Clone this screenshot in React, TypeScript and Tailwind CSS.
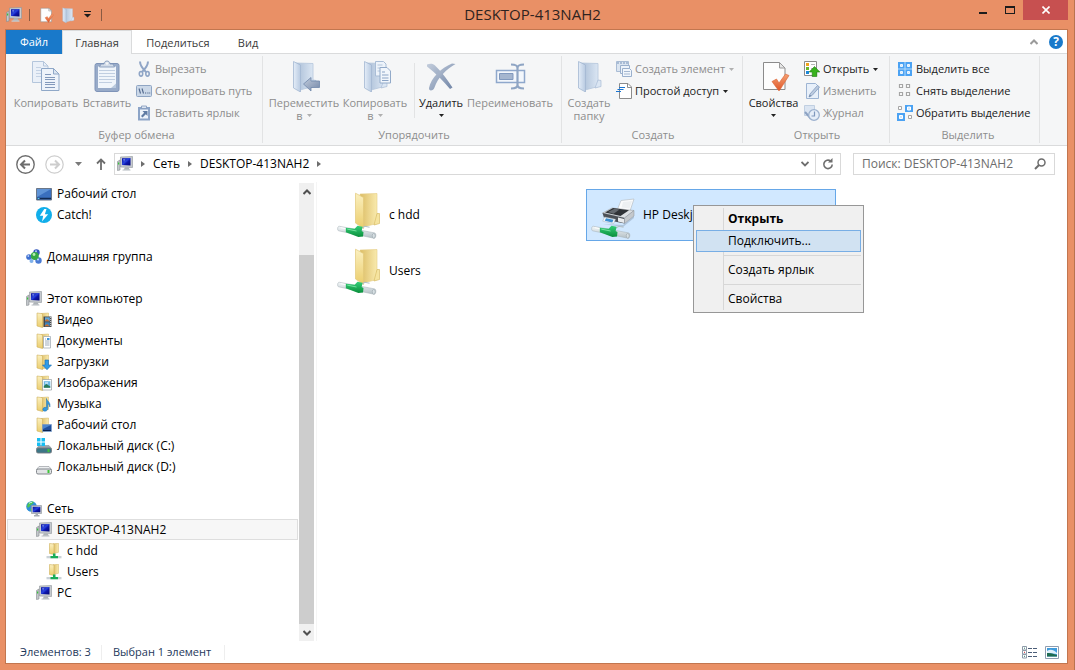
import type { ReactNode } from "react";

type IconProps = { className?: string };

const Gradients = () => (
  <svg className="absolute h-0 w-0" aria-hidden="true">
    <defs>
      <linearGradient id="paleFront" x1="0" x2="1">
        <stop offset="0" stopColor="#e4edf8" />
        <stop offset="1" stopColor="#b8cae1" />
      </linearGradient>
      <linearGradient id="paleBack" x1="0" x2="1">
        <stop offset="0" stopColor="#a9bdd6" />
        <stop offset="1" stopColor="#dbe6f3" />
      </linearGradient>
      <linearGradient id="goldFront" x1="0" x2="0" y1="0" y2="1">
        <stop offset="0" stopColor="#fbf0c0" />
        <stop offset="1" stopColor="#ebcd6c" />
      </linearGradient>
      <linearGradient id="goldBack" x1="0" x2="1">
        <stop offset="0" stopColor="#dcbd65" />
        <stop offset="1" stopColor="#f9eaae" />
      </linearGradient>
      <linearGradient id="screen" x1="0" x2="1" y1="0" y2="1">
        <stop offset="0" stopColor="#0a0f9c" />
        <stop offset="0.45" stopColor="#2742dc" />
        <stop offset="0.6" stopColor="#0d16ae" />
        <stop offset="1" stopColor="#060870" />
      </linearGradient>
      <linearGradient id="steel" x1="0" x2="1" y1="0" y2="1">
        <stop offset="0" stopColor="#c3cddc" />
        <stop offset="1" stopColor="#7387a8" />
      </linearGradient>
      <linearGradient id="orange" x1="0" x2="0" y1="0" y2="1">
        <stop offset="0" stopColor="#f4a173" />
        <stop offset="1" stopColor="#e0582a" />
      </linearGradient>
      <linearGradient id="cable" x1="0" x2="0" y1="0" y2="1">
        <stop offset="0" stopColor="#35cf78" />
        <stop offset="1" stopColor="#0b8f3c" />
      </linearGradient>
      <linearGradient id="pipe" x1="0" x2="0" y1="0" y2="1">
        <stop offset="0" stopColor="#f4f8f9" />
        <stop offset="1" stopColor="#b3bfc5" />
      </linearGradient>
    </defs>
  </svg>
);

const PcIcon = ({ className = "h-4 w-4" }: IconProps) => (
  <svg className={className} viewBox="0 0 16 16">
    <path d="M0.500 5.500L3 4v10L0.500 14.500z" fill="#c3c7cb" stroke="#85898d" strokeWidth="0.6" />
    <path d="M1 6.500h1.200v2H1z" fill="#36c43a" />
    <path d="M3.500 1L15.500 0.500v11L3.500 11z" fill="#c6cacf" stroke="#8d9399" strokeWidth="0.6" />
    <path d="M5 2.300L13.500 2v7.500L5 9z" fill="url(#screen)" />
    <path d="M6 3l2.500-0.200L7 6z" fill="#8195f0" opacity="0.700" />
    <path d="M8 11.300h3.500L13 14H6.500z" fill="#aeb3b8" />
    <path d="M5.500 13.500h8v1.200h-8z" fill="#c9cdd1" />
  </svg>
);

const SmallFolder = ({ className = "h-4 w-4", children }: IconProps & { children?: ReactNode }) => (
  <svg className={className} viewBox="0 0 16 16">
    <path d="M5 1.500L12.500 1v12.500L6 15z" fill="url(#goldBack)" stroke="#d2b463" strokeWidth="0.5" />
    <path d="M1 1l5.500 0.700v13.800L1 14z" fill="url(#goldFront)" stroke="#cfb05a" strokeWidth="0.6" />
    {children}
  </svg>
);

const VideoIcon = () => (
  <SmallFolder>
    <path d="M7.500 4.500h8v10.500h-8z" fill="#45484c" />
    <path d="M9 5.300h4.800v4H9z" fill="#63a6d6" />
    <path d="M9 10.300h4.800v4H9z" fill="#3f86bd" />
    <path d="M9 8.500l2-1.500 2.800 2.300H9zM9 13.500l2-1.500 2.800 2.300H9z" fill="#c66f35" />
    <path d="M14.700 5v10" stroke="#fff" strokeWidth="0.8" strokeDasharray="1 1" />
  </SmallFolder>
);

const DocsIcon = () => (
  <SmallFolder>
    <path d="M7.500 3.500h7v11.500h-7z" fill="#fff" stroke="#9aa4ad" strokeWidth="0.7" />
    <path d="M9 6h1M9 8h4.500M9 10h4.500M9 12h4.500" stroke="#8697a8" strokeWidth="0.8" />
    <path d="M11 5h2.500v2H11z" fill="#3b94da" />
  </SmallFolder>
);

const DownloadsIcon = () => (
  <SmallFolder>
    <path d="M9 6h3.500v5h3L11 15.700 6.500 11H9z" fill="#2f9be8" stroke="#176cb0" strokeWidth="0.6" />
  </SmallFolder>
);

const PicturesIcon = () => (
  <SmallFolder>
    <path d="M6.500 4.500h9v10.500h-9z" fill="#fff" stroke="#959da4" strokeWidth="0.7" />
    <path d="M7.800 6.200h6.500v6.500H7.800z" fill="#6cb8e6" />
    <path d="M7.800 11l2.500-2 4 2.500v1.200H7.800z" fill="#2b7b58" />
    <path d="M9 7.500h3v1H9z" fill="#fff" />
  </SmallFolder>
);

const MusicIcon = () => (
  <SmallFolder>
    <path d="M10.500 2.500c0.500 3 4.500 3.500 3.300 8.500-0.300-2-1-3-2-3.500v4.800c0 3.500-5 3.700-5 1.200 0-1.700 2-2.600 3.700-2z" fill="#3499de" stroke="#1a6cad" strokeWidth="0.5" />
  </SmallFolder>
);

const DesktopFolderIcon = () => (
  <SmallFolder>
    <path d="M6.500 7.500h9v7h-9z" fill="#1f4f9e" stroke="#7ea0cc" strokeWidth="0.7" />
    <path d="M7 8l8 0-8 4z" fill="#4b86d0" />
    <path d="M7 13.500h8" stroke="#0c2350" />
  </SmallFolder>
);

const DesktopIcon = () => (
  <svg className="h-4 w-4" viewBox="0 0 16 16">
    <path d="M0.500 2.500h15v11.500h-15z" fill="#3a6fbe" stroke="#6b7788" />
    <path d="M1 3h14L1 11z" fill="#5f93d6" />
    <path d="M1 12.500h14" stroke="#122a52" strokeWidth="1.500" />
    <path d="M1.500 12.500h2" stroke="#58c7f0" />
  </svg>
);

const CatchIcon = () => (
  <svg className="h-4 w-4" viewBox="0 0 16 16">
    <circle cx="8" cy="8" r="8" fill="#11aeea" />
    <path d="M8.300 2L3.800 8.800h3.400L6 14.500 12.200 7.200H8.900L10.500 2z" fill="#fff" />
  </svg>
);

const HomegroupIcon = () => (
  <svg className="h-4 w-4" viewBox="0 0 16 16">
    <circle cx="3" cy="8" r="2.800" fill="#3d6fd0" />
    <circle cx="10.500" cy="3.500" r="3.200" fill="#3558bd" />
    <circle cx="12.500" cy="11.500" r="3.200" fill="#4a7bd4" />
    <circle cx="8.800" cy="7" r="4" fill="#35a845" />
    <circle cx="5.500" cy="12" r="2" fill="#7fb0ea" />
    <circle cx="8" cy="5.500" r="1.400" fill="#b9efb4" />
    <circle cx="10" cy="2.200" r="1" fill="#b8cdf8" />
    <circle cx="2.300" cy="7" r="0.900" fill="#b8cdf8" />
    <circle cx="12" cy="10.500" r="1" fill="#c9dcfa" />
  </svg>
);

const DriveIcon = ({ system = false }: { system?: boolean }) => (
  <svg className="h-4 w-4" viewBox="0 0 16 16">
    <path d="M3 7.500h10l2.500 3H0.500z" fill={system ? "#9aa6ae" : "#eceef0"} stroke="#8b9095" strokeWidth="0.6" />
    {system && <path d="M1 0h3.500v3.500H1zM5.500 0H9v3.500H5.500zM1 4.500h3.500V8H1zM5.500 4.500H9V8H5.500z" fill="#16bdf2" />}
    <rect x="0.500" y="10" width="15" height="5" rx="1.500" fill={system ? "#3d7686" : "#e2e4e6"} stroke="#777c81" strokeWidth="0.9" />
    <path d="M11.500 11h2v3h-2z" fill="#3fc43a" />
  </svg>
);

const NetworkIcon = () => (
  <svg className="h-4 w-4" viewBox="0 0 16 16">
    <circle cx="5.500" cy="5.500" r="5.300" fill="#2f8fd8" />
    <path d="M2 2.500C4 0 7 0.200 8 1c-1 1-1 2-2.500 2.500S4 6 2.500 6.500 0.500 5 2 2.500zM4 8l3-1 1 2-2.500 1.800z" fill="#4cc456" />
    <path d="M3 2.500c1-1 2-1.200 3-1" stroke="#d4f4ff" fill="none" />
    <path d="M5.500 4.500h10v8h-10z" fill="#c3c8ce" stroke="#8a9097" strokeWidth="0.6" />
    <path d="M6.700 5.800h7.600v5.400H6.700z" fill="url(#screen)" />
    <path d="M9.500 12.500h2.500v1.500h1.500v1.500H8v-1.500h1.500z" fill="#a7adb3" />
  </svg>
);

const ShareIcon = () => (
  <svg className="h-4 w-4" viewBox="0 0 16 16">
    <path d="M7 0.800l5.500-0.500v9L8 10.500z" fill="url(#goldBack)" stroke="#d2b463" strokeWidth="0.5" />
    <path d="M3.500 0.500L8 1v10.500l-4.500-1z" fill="url(#goldFront)" stroke="#cfb05a" strokeWidth="0.6" />
    <path d="M0.500 13h15v2.300h-15z" fill="#cbd3d8" />
    <path d="M7 10.500h2.500V13h2.500v2.300H4.500V13H7z" fill="#18ad59" />
  </svg>
);

const NetworkCable = () => (
  <g transform="translate(0 2) scale(0.93 0.95)">
    <path d="M23 39l7-4 5 1" fill="none" stroke="#b5c0c4" strokeWidth="1.200" />
    <path d="M2.500 35l38 7c2 0.500 1.500 6-0.800 5.600L1.700 39.800C0 39.300 0.500 34.500 2.500 35z" fill="url(#pipe)" stroke="#aab4b9" strokeWidth="0.6" />
    <path d="M4 36.500l8 1.600" stroke="#fff" />
    <ellipse cx="39.500" cy="45" rx="1.600" ry="2.500" fill="#d7e0e4" stroke="#97a3a9" strokeWidth="0.600" />
    <path d="M9.500 36.500l9.500 1.200 3-3.200 5.500 1-1 4.500 2 1-0.500 4.700-5 0.500L9.500 41.300z" fill="url(#cable)" />
    <path d="M11 38l10 2" stroke="#8eeeb2" strokeWidth="0.800" />
  </g>
);

const FolderShareLarge = () => (
  <svg className="h-12 w-12" viewBox="0 0 48 48">
    <path d="M23 3l17-0.500v30L26 36z" fill="url(#goldBack)" stroke="#e4cd85" strokeWidth="0.6" />
    <path d="M40 22.500h2.500V32.500L37 34z" fill="#f6e49f" stroke="#d9bd68" strokeWidth="0.7" />
    <path d="M18.500 2.200L26.500 6.500v31L18.500 32z" fill="url(#goldFront)" stroke="#e2c87a" strokeWidth="0.7" />
    <NetworkCable />
  </svg>
);

const PrinterLarge = () => (
  <svg className="h-12 w-12" viewBox="0 0 48 48">
    <path d="M12 33l20 1 11-9v2L32 36z" fill="#8fa6bd" opacity="0.500" />
    <path d="M30 9.500l13-1.500-4.500 13.500-12.500-2z" fill="#fafbfc" stroke="#b8bec4" strokeWidth="0.7" />
    <path d="M32 11l9-1-2.500 7.500-8-1z" fill="#edf0f2" />
    <path d="M11.500 22l9.500-5 22 2.500-9.500 7.500z" fill="#dcdfe2" stroke="#9aa0a5" strokeWidth="0.6" />
    <path d="M14 21.500l8-4.500 16 2.200-8.500 5.800z" fill="#303337" />
    <path d="M17 21l6.500-3.200 5 0.800-6 4.200z" fill="#63686e" />
    <path d="M11.500 22l22 5v5.500L13.500 28.500z" fill="#4c5056" />
    <path d="M33.500 27l9.500-7.500v5.500l-9.500 7.500z" fill="#c4c8cc" stroke="#8c9196" strokeWidth="0.5" />
    <path d="M27 26.500l6 1.400v4L27 30.600z" fill="#e9ebed" />
    <path d="M13.500 26l11 2.300-1.800 4.200-11-2.300z" fill="#f5f8fa" stroke="#9fb0be" strokeWidth="0.500" />
    <path d="M15 27.200l7.500 1.600-1.200 2.700-7.500-1.700z" fill="#3b8fd2" />
    <NetworkCable />
  </svg>
);

const CopyIcon = () => (
  <svg className="h-8 w-8" viewBox="0 0 32 32">
    <path d="M2.500 1.500h11l4.500 4.500v16.500h-15.500z" fill="#eaf0f8" stroke="#b4c6dc" />
    <path d="M13.500 1.500v4.500h4.500" fill="none" stroke="#b4c6dc" />
    <path d="M6 7.500h5M6 10.500h5M6 13.500h5M6 16.500h5" stroke="#c4d2e4" />
    <path d="M11.500 8.500h12l5.500 5.500v16.500H11.500z" fill="#edf3fa" stroke="#8fa8c8" />
    <path d="M23.500 8.500v5.500H29z" fill="#dbe6f2" stroke="#8fa8c8" />
    <path d="M15 14.500h6M15 17.500h10M15 19.500h10M15 22.500h10M15 24.500h10M15 27.500h10" stroke="#8299bb" />
  </svg>
);

const PasteIcon = () => (
  <svg className="h-8 w-8" viewBox="0 0 32 32">
    <rect x="4" y="3.500" width="24" height="28" rx="2" fill="#98abc9" stroke="#7f94b8" />
    <path d="M7 6.500h18v21.500H7z" fill="#f0f5fb" />
    <path d="M8 10.500h16M8 13.500h16M8 16.500h16M8 19.500h16M8 22.500h13" stroke="#c0cee1" />
    <path d="M20 28l5-4.500V28z" fill="#b9c9de" />
    <path d="M10 4h3c0-4 6-4 6 0h3l1.500 3h-15z" fill="#d3dce9" stroke="#7c93b5" strokeWidth="0.800" />
    <circle cx="16" cy="3.500" r="1.200" fill="#f5f6f7" />
  </svg>
);

const CutIcon = () => (
  <svg className="h-4 w-4" viewBox="0 0 16 16" fill="none">
    <path d="M4 0.500C4 4 7 8 10 11M12 0.500C12 4 9 8 6 11" stroke="#8fa5c6" strokeWidth="2" />
    <ellipse cx="5" cy="12.800" rx="1.700" ry="2.300" stroke="#8fa5c6" strokeWidth="1.600" />
    <ellipse cx="11.500" cy="12.800" rx="1.700" ry="2.300" stroke="#8fa5c6" strokeWidth="1.600" />
  </svg>
);

const CopyPathIcon = () => (
  <svg className="h-4 w-4" viewBox="0 0 16 16">
    <rect x="0.500" y="2.500" width="15" height="11" rx="1" fill="#cbd8e8" stroke="#8fa5c3" />
    <path d="M3 5.500l1.500 5M6 5.500l1.500 5" stroke="#4f678c" strokeWidth="1.100" />
    <path d="M9 10h1.200M11.300 10h1.200M13.200 10h1" stroke="#4f678c" strokeWidth="1.200" />
  </svg>
);

const PasteLinkIcon = () => (
  <svg className="h-4 w-4" viewBox="0 0 16 16">
    <path d="M2 2h12v13.500H2z" fill="#8ca4c7" />
    <path d="M4 4.500h8v9H4z" fill="#edf3fa" />
    <path d="M5.500 1h5v2.500h-5z" fill="#dbe4f0" stroke="#8298ba" strokeWidth="0.800" />
    <path d="M6.500 6h5v5L9.800 9.300 6.500 12.500 5 11l3.200-3.300z" fill="#5f7ba3" />
  </svg>
);

const PaleFolder = ({ className = "h-8 w-8", children }: IconProps & { children?: ReactNode }) => (
  <svg className={className} viewBox="0 0 32 32">
    <path d="M8 3l17 0.500v23L12 30z" fill="url(#paleBack)" stroke="#b5c7dc" strokeWidth="0.8" />
    <path d="M25 20l3 0.500v6L22 28z" fill="#dbe6f3" stroke="#a9bcd5" strokeWidth="0.700" />
    <path d="M5.500 1.500l7 3.500v27l-7-4z" fill="url(#paleFront)" stroke="#a3b8d2" strokeWidth="0.800" />
    {children}
  </svg>
);

const MoveToIcon = () => (
  <PaleFolder>
    <path d="M15.500 24l7.500-6.500v3.500h8.500v6.500H23V31z" fill="url(#steel)" stroke="#7088ab" strokeWidth="0.800" />
  </PaleFolder>
);

const CopyToIcon = () => (
  <PaleFolder>
    <path d="M16.500 1.500h8l2.500 2.500v12H16.500z" fill="#edf3fa" stroke="#a9bdd6" />
    <path d="M18.500 5h5M18.500 8h5M18.500 11h3" stroke="#b4c6dc" />
    <path d="M21 7.500h7l3.500 3.500v12H21z" fill="#f1f6fc" stroke="#92aac9" />
    <path d="M23 12h3M23 15h6.500M23 18h6.500M23 20.500h6.500" stroke="#8ba4c6" />
  </PaleFolder>
);

const DeleteIcon = () => (
  <svg className="h-8 w-8" viewBox="0 0 32 32">
    <path d="M2 4.500C5 3.500 8 3.500 10 5.500 16 11 21 18 27.500 27.500L25 29C18 21 11 13 2 6.500z" fill="url(#steel)" />
    <path d="M30.500 4C22 9 13 17 9.500 27.500 8.500 31 3.500 31.500 4 28 6 18 16 8 27 3.500z" fill="url(#steel)" />
  </svg>
);

const RenameIcon = () => (
  <svg className="h-8 w-8" viewBox="0 0 32 32">
    <path d="M2.500 10.500h28v12h-28z" fill="#f3f7fc" stroke="#8fa8cc" strokeWidth="1.500" />
    <path d="M5.500 13.500H19v6H5.500z" fill="#a5b6cf" stroke="#8199be" />
    <path d="M17 4.500c4 0 6.500 1 6.500 3.500 0-2.500 2.500-3.500 6.500-3.500M17 28.500c4 0 6.500-1 6.500-3.500 0 2.500 2.500 3.500 6.500 3.500M23.500 7v19" fill="none" stroke="#8fa5c4" strokeWidth="2.200" />
  </svg>
);

const PropertiesIcon = ({ className = "h-8 w-8" }: IconProps) => (
  <svg className={className} viewBox="0 0 32 32">
    <path d="M5.500 2.500h16l5.500 5.500v21.500H5.500z" fill="#fdfdfd" stroke="#8b8b8b" />
    <path d="M21.500 2.500V8H27z" fill="#e7e7e7" stroke="#9a9a9a" />
    <path d="M14 21.500l4.500-2.500 2.500 4L27.500 14l3.500 1.500-9.500 15h-1z" fill="url(#orange)" stroke="#d96233" strokeWidth="0.600" />
  </svg>
);

const NewItemIcon = () => (
  <svg className="h-4 w-4" viewBox="0 0 16 16">
    <path d="M0.500 0.500h12v10h-12z" fill="#dbe5f1" stroke="#a9bcd5" />
    <path d="M1 2h11" stroke="#a9bcd5" strokeWidth="2" strokeDasharray="2 1" />
    <path d="M4.500 4.500h9v8h-9z" fill="#edf3fa" stroke="#9ab0cd" />
    <path d="M6.500 7.500h7l2 2v6h-9z" fill="#f1f6fc" stroke="#9ab0cd" />
    <path d="M8 10.500h6M8 13h6" stroke="#a5b8d1" />
  </svg>
);

const EasyAccessIcon = () => (
  <svg className="h-4 w-4" viewBox="0 0 16 16">
    <path d="M3.500 0.500h8.500l3.500 3.500v11.500h-12z" fill="#fff" stroke="#8c8c8c" />
    <path d="M11.500 0.500v4h4" fill="none" stroke="#8c8c8c" />
    <path d="M3 4.500h6M1.500 6.500h6M0 8.500h5" stroke="#1974d2" strokeWidth="1.200" />
  </svg>
);

const OpenIcon = () => (
  <svg className="h-4 w-4" viewBox="0 0 16 16">
    <path d="M0.500 0.500h12v14h-12z" fill="#fff" stroke="#8b8b8b" />
    <path d="M2 2h3v3H2z" fill="#f0a41c" />
    <path d="M2 6h3v3H2z" fill="#6cb82c" />
    <path d="M2 10h3v3H2z" fill="#1b86d8" />
    <path d="M7 3.500h4M7 7.500h3" stroke="#b8b8b8" />
    <path d="M10.500 5.500l5.300 5.500h-3v4.500h-4.600V11h-3z" fill="#38b21d" stroke="#1f7e12" strokeWidth="0.600" />
  </svg>
);

const EditIcon = () => (
  <svg className="h-4 w-4" viewBox="0 0 16 16">
    <path d="M2.500 0.500h9l3 3v12h-12z" fill="#e8f0fa" stroke="#9db4d3" />
    <path d="M15.500 4L8 12.500l-3 1.500 1-3L13.500 2.500z" fill="#bccbe0" stroke="#8ba1c2" strokeWidth="0.900" />
    <path d="M5 14l1-2 1 0.800z" fill="#5c7496" />
  </svg>
);

const HistoryIcon = () => (
  <svg className="h-4 w-4" viewBox="0 0 16 16">
    <path d="M0.500 0.500h10v10h-10z" fill="#dbe5f2" stroke="#c0cfe1" />
    <path d="M1 7l4 4.500V9.500" stroke="#8ba1c2" strokeWidth="2" fill="none" />
    <circle cx="10" cy="10" r="5.300" fill="#e6eef8" stroke="#9cb1ce" strokeWidth="1.300" />
    <path d="M10.500 6.500v4.500H7.500" fill="none" stroke="#7f98bd" strokeWidth="1.200" />
  </svg>
);

const SelectAllIcon = () => (
  <svg className="h-4 w-4" viewBox="0 0 16 16">
    <path d="M1 1h14v14H1z" fill="#4ba2f3" />
    <path d="M3.500 3.500h2v2h-2zM10.500 3.500h2v2h-2zM3.500 10.500h2v2h-2zM10.500 10.500h2v2h-2z" fill="#cfe7fd" stroke="#f0f8ff" />
    <path d="M8 1v14M1 8h14" stroke="#b3dafb" />
  </svg>
);

const SelectNoneIcon = () => (
  <svg className="h-4 w-4" viewBox="0 0 16 16">
    <path d="M2.500 1.500h3v3h-3zM9.500 1.500h3v3h-3zM2.500 9.500h3v3h-3zM9.500 9.500h3v3h-3z" fill="#fff" stroke="#a5a5a5" strokeWidth="1.200" />
  </svg>
);

const InvertIcon = () => (
  <svg className="h-4 w-4" viewBox="0 0 16 16">
    <path d="M8 0h8v7H8zM0 8h8v8H0z" fill="#4ba2f3" />
    <path d="M10.500 2h3v3h-3zM2.500 10.500h3v3h-3z" fill="#cfe7fd" stroke="#fff" />
    <path d="M1.500 1.500h3v3h-3zM11.500 10.500h3v3h-3z" fill="#fff" stroke="#a5a5a5" />
  </svg>
);

const Caret = ({ className = "text-[#222222]" }: IconProps) => (
  <svg className={`inline-block h-[3px] w-[5px] ${className}`} viewBox="0 0 5 3">
    <path d="M0 0h5L2.500 3z" fill="currentColor" />
  </svg>
);

const Chevron = () => (
  <svg className="h-[6px] w-1" viewBox="0 0 4 6">
    <path d="M0 0l4 3-4 3z" fill="#6d6d6d" />
  </svg>
);

type BigButtonProps = {
  icon: ReactNode;
  label: string;
  second?: string;
  caret?: boolean;
  disabled?: boolean;
  className: string;
};

const BigButton = ({ icon, label, second, caret, disabled, className }: BigButtonProps) => (
  <button
    type="button"
    disabled={disabled}
    className={`mt-1 flex shrink-0 flex-col items-center self-start whitespace-nowrap leading-[13px] text-[#222222] disabled:text-[#8d8d8d] ${className}`}
  >
    {icon}
    <span className="mt-1">{label}</span>
    <span className="flex h-[13px] items-center gap-1">
      {second}
      {caret && <Caret className={disabled ? "text-[#b0b0b0]" : "text-[#222222]"} />}
    </span>
  </button>
);

type SmallButtonProps = { icon: ReactNode; label: string; caret?: boolean; disabled?: boolean };

const SmallButton = ({ icon, label, caret, disabled }: SmallButtonProps) => (
  <button
    type="button"
    disabled={disabled}
    className="flex h-[22px] items-center gap-[3px] whitespace-nowrap text-[#222222] disabled:text-[#8d8d8d]"
  >
    {icon}
    <span>{label}</span>
    {caret && <Caret className={disabled ? "ml-px text-[#b0b0b0]" : "ml-px text-[#222222]"} />}
  </button>
);

const Group = ({ title, className, children }: { title: string; className: string; children: ReactNode }) => (
  <section className={`my-[2px] flex shrink-0 flex-col border-r border-[#e2e3e4] ${className}`}>
    <div className="flex h-[73px]">{children}</div>
    <h2 className="text-center leading-4 text-[#8d8d8d]">{title}</h2>
  </section>
);

const ButtonList = ({ className = "", children }: { className?: string; children: ReactNode }) => (
  <div className={`mt-[2px] flex flex-col ${className}`}>{children}</div>
);

const Ribbon = () => (
  <div className="flex h-[92px] border-b border-[#dadbdc] bg-[#f5f6f7] text-[11px]">
    <Group title="Буфер обмена" className="w-[257px] pl-[5px]">
      <BigButton icon={<CopyIcon />} label="Копировать" disabled className="w-[70px]" />
      <BigButton icon={<PasteIcon />} label="Вставить" disabled className="w-[52px]" />
      <ButtonList className="ml-[3px]">
        <SmallButton icon={<CutIcon />} label="Вырезать" disabled />
        <SmallButton icon={<CopyPathIcon />} label="Скопировать путь" disabled />
        <SmallButton icon={<PasteLinkIcon />} label="Вставить ярлык" disabled />
      </ButtonList>
    </Group>
    <Group title="Упорядочить" className="w-[299px] pl-1">
      <BigButton icon={<MoveToIcon />} label="Переместить" second="в" caret disabled className="w-[74px]" />
      <BigButton icon={<CopyToIcon />} label="Копировать" second="в" caret disabled className="w-[68px]" />
      <div className="mt-[7px] ml-[5px] h-[55px] w-px bg-[#e2e3e4]" />
      <BigButton icon={<DeleteIcon />} label="Удалить" caret className="w-[52px]" />
      <BigButton icon={<RenameIcon />} label="Переименовать" disabled className="w-[86px]" />
    </Group>
    <Group title="Создать" className="w-[181px] pl-[2px]">
      <BigButton icon={<PaleFolder />} label="Создать" second="папку" disabled className="w-[50px]" />
      <ButtonList className="ml-[2px]">
        <SmallButton icon={<NewItemIcon />} label="Создать элемент" caret disabled />
        <SmallButton icon={<EasyAccessIcon />} label="Простой доступ" caret />
      </ButtonList>
    </Group>
    <Group title="Открыть" className="w-[147px] pl-[2px]">
      <BigButton icon={<PropertiesIcon />} label="Свойства" caret className="w-[57px]" />
      <ButtonList className="ml-[2px]">
        <SmallButton icon={<OpenIcon />} label="Открыть" caret />
        <SmallButton icon={<EditIcon />} label="Изменить" disabled />
        <SmallButton icon={<HistoryIcon />} label="Журнал" disabled />
      </ButtonList>
    </Group>
    <Group title="Выделить" className="w-[150px] pl-[7px]">
      <ButtonList>
        <SmallButton icon={<SelectAllIcon />} label="Выделить все" />
        <SmallButton icon={<SelectNoneIcon />} label="Снять выделение" />
        <SmallButton icon={<InvertIcon />} label="Обратить выделение" />
      </ButtonList>
    </Group>
  </div>
);

const TitleBar = () => (
  <header className="relative flex h-[29px] items-center">
    <div className="flex items-center pl-px">
      <PcIcon />
      <span className="ml-[7px] h-3 w-px bg-[#8a5a42]" />
      <button type="button" aria-label="Свойства" className="ml-2">
        <PropertiesIcon className="h-4 w-4" />
      </button>
      <button type="button" aria-label="Новая папка" className="ml-[6px]">
        <PaleFolder className="h-4 w-4" />
      </button>
      <button type="button" aria-label="Настройка панели быстрого доступа" className="ml-2">
        <svg className="h-[7px] w-[7px]" viewBox="0 0 7 7">
          <path d="M0 0h7v1H0zM0 3h7L3.500 6.500z" fill="#1c1c1c" />
        </svg>
      </button>
      <span className="ml-[10px] h-3 w-px bg-[#8a5a42]" />
    </div>
    <h1 className="absolute inset-x-0 top-1 pr-2 text-center text-[15px] leading-5 text-[#2e2320]">
      DESKTOP-413NAH2
    </h1>
    <div className="relative ml-auto flex h-5 self-start">
      <button type="button" aria-label="Свернуть" className="flex w-[27px] items-center justify-center">
        <svg className="h-[10px] w-[10px]" viewBox="0 0 10 10">
          <path d="M1 7h8v2H1z" fill="#1c1c1c" />
        </svg>
      </button>
      <button type="button" aria-label="Развернуть" className="flex w-[27px] items-center justify-center">
        <svg className="h-[10px] w-[10px]" viewBox="0 0 10 10">
          <path d="M0 1h10v8H0zM1 3v5h8V3z" fill="#1c1c1c" fillRule="evenodd" />
        </svg>
      </button>
      <button type="button" aria-label="Закрыть" className="flex w-[45px] items-center justify-center bg-[#c75050]">
        <svg className="h-2 w-2" viewBox="0 0 8 8">
          <path d="M0.500 0.500l7 7M7.500 0.500l-7 7" stroke="#fff" strokeWidth="1.600" />
        </svg>
      </button>
    </div>
  </header>
);

const TabBar = () => (
  <div className="flex h-6 items-stretch border-b border-[#dadbdc] bg-white text-[11px] text-[#3b3b3b]">
    <button type="button" className="mb-[-1px] w-14 bg-[#1979ca] text-white">
      Файл
    </button>
    <button type="button" className="mb-[-1px] w-[70px] border-x border-t border-[#dadbdc] bg-[#f5f6f7] pt-[2px]">
      Главная
    </button>
    <button type="button" className="w-[92px] pt-[3px]">
      Поделиться
    </button>
    <button type="button" className="w-12 pt-[3px]">
      Вид
    </button>
    <div className="ml-auto flex items-center gap-[11px] pr-1">
      <button type="button" aria-label="Свернуть ленту">
        <svg className="h-[6px] w-2" viewBox="0 0 8 6">
          <path d="M0.500 5L4 1.500 7.500 5" fill="none" stroke="#9a9a9a" strokeWidth="2" />
        </svg>
      </button>
      <button
        type="button"
        aria-label="Справка"
        className="flex h-[14px] w-[14px] items-center justify-center rounded-full bg-[#1979ca] text-xs leading-3 font-bold text-white"
      >
        ?
      </button>
    </div>
  </div>
);

const AddressRow = () => (
  <div className="flex h-9 items-center pr-3 pl-[10px]">
    <button type="button" aria-label="Назад">
      <svg className="h-[19px] w-[19px]" viewBox="0 0 19 19" fill="none" stroke="#6d6d6d">
        <circle cx="9.500" cy="9.500" r="8.700" strokeWidth="1.400" />
        <path d="M14 9.500H5.500M9 5.500l-4 4 4 4" strokeWidth="2" />
      </svg>
    </button>
    <button type="button" aria-label="Вперед" className="ml-[10px]">
      <svg className="h-[19px] w-[19px]" viewBox="0 0 19 19" fill="none" stroke="#cdcdcd">
        <circle cx="9.500" cy="9.500" r="8.700" strokeWidth="1.200" />
        <path d="M5 9.500h8.500M10 5.500l4 4-4 4" strokeWidth="2" />
      </svg>
    </button>
    <button type="button" aria-label="Последние места" className="ml-[11px] flex">
      <svg className="h-1 w-[7px]" viewBox="0 0 7 4">
        <path d="M0 0h7L3.500 4z" fill="#7a7a7a" />
      </svg>
    </button>
    <button type="button" aria-label="Вверх" className="ml-[14px]">
      <svg className="h-3 w-[10px]" viewBox="0 0 10 12" fill="none" stroke="#6d6d6d" strokeWidth="1.800">
        <path d="M5 12V1.500M1 5.500l4-4 4 4" />
      </svg>
    </button>
    <div className="ml-2 flex h-[22px] min-w-0 flex-1 items-stretch border border-[#d9d9d9] text-black">
      <nav className="flex flex-1 items-center gap-2 pl-[2px]">
        <PcIcon />
        <Chevron />
        <a href="#network">Сеть</a>
        <Chevron />
        <a href="#desktop">DESKTOP-413NAH2</a>
        <Chevron />
      </nav>
      <button type="button" aria-label="Предыдущие адреса" className="flex w-5 items-center justify-center">
        <svg className="h-[6px] w-2" viewBox="0 0 8 6">
          <path d="M0.500 1L4 4.500 7.500 1" fill="none" stroke="#6d6d6d" strokeWidth="1.800" />
        </svg>
      </button>
      <button type="button" aria-label="Обновить" className="flex w-[25px] items-center justify-center border-l border-[#d9d9d9]">
        <svg className="h-3 w-3" viewBox="0 0 12 12">
          <path d="M8.500 3A4.200 4.200 0 1 0 10.200 6.500" fill="none" stroke="#6d6d6d" strokeWidth="1.600" />
          <path d="M6 4.500h4.500V0z" fill="#6d6d6d" />
        </svg>
      </button>
    </div>
    <label className="ml-3 flex h-[22px] w-[202px] items-center border border-[#d9d9d9] pr-2 pl-2">
      <input
        type="text"
        aria-label="Поиск"
        placeholder="Поиск: DESKTOP-413NAH2"
        className="min-w-0 flex-1 placeholder-[#6d6d6d] outline-none"
      />
      <svg className="h-3 w-3" viewBox="0 0 12 12" fill="none" stroke="#6d6d6d">
        <circle cx="7.500" cy="4.500" r="3.500" strokeWidth="1.500" />
        <path d="M5 7L1 11" strokeWidth="2" />
      </svg>
    </label>
  </div>
);

type NavItem = { icon: ReactNode; label: string; level: 0 | 1 | 2; selected?: boolean };

const navSections: NavItem[][] = [
  [
    { icon: <DesktopIcon />, label: "Рабочий стол", level: 1 },
    { icon: <CatchIcon />, label: "Catch!", level: 1 },
  ],
  [{ icon: <HomegroupIcon />, label: "Домашняя группа", level: 0 }],
  [
    { icon: <PcIcon />, label: "Этот компьютер", level: 0 },
    { icon: <VideoIcon />, label: "Видео", level: 1 },
    { icon: <DocsIcon />, label: "Документы", level: 1 },
    { icon: <DownloadsIcon />, label: "Загрузки", level: 1 },
    { icon: <PicturesIcon />, label: "Изображения", level: 1 },
    { icon: <MusicIcon />, label: "Музыка", level: 1 },
    { icon: <DesktopFolderIcon />, label: "Рабочий стол", level: 1 },
    { icon: <DriveIcon system />, label: "Локальный диск (C:)", level: 1 },
    { icon: <DriveIcon />, label: "Локальный диск (D:)", level: 1 },
  ],
  [
    { icon: <NetworkIcon />, label: "Сеть", level: 0 },
    { icon: <PcIcon />, label: "DESKTOP-413NAH2", level: 1, selected: true },
    { icon: <ShareIcon />, label: "c hdd", level: 2 },
    { icon: <ShareIcon />, label: "Users", level: 2 },
    { icon: <PcIcon />, label: "PC", level: 1 },
  ],
];

const indents = ["pl-[18px]", "pl-7", "pl-[38px]"];

const NavPane = () => (
  <aside className="flex w-[311px] shrink-0 border-r border-[#f5f5f5] pt-px">
    <nav className="flex min-w-0 flex-1 flex-col gap-[21px] px-px">
      {navSections.map((section, i) => (
        <ul key={i}>
          {section.map((item) => (
            <li key={item.label}>
              <a
                href="#item"
                className={`flex h-[21px] items-center gap-[5px] border text-black ${indents[item.level]} ${
                  item.selected ? "border-[#dedede] bg-[#f7f7f7]" : "border-transparent"
                }`}
              >
                {item.icon}
                {item.label}
              </a>
            </li>
          ))}
        </ul>
      ))}
    </nav>
    <div className="mr-[2px] flex w-[15px] flex-col bg-[#f0f0f0]">
      <button type="button" aria-label="Прокрутить вверх" className="flex h-[17px] items-center justify-center">
        <svg className="h-[6px] w-2" viewBox="0 0 8 6">
          <path d="M0.500 5L4 1.500 7.500 5" fill="none" stroke="#505050" strokeWidth="2" />
        </svg>
      </button>
      <div className="mt-[55px] flex-1 bg-[#cdcdcd]" />
      <button type="button" aria-label="Прокрутить вниз" className="flex h-[17px] items-center justify-center">
        <svg className="h-[6px] w-2" viewBox="0 0 8 6">
          <path d="M0.500 1L4 4.500 7.500 1" fill="none" stroke="#505050" strokeWidth="2" />
        </svg>
      </button>
    </div>
  </aside>
);

const Tile = ({ icon, label, selected }: { icon: ReactNode; label: string; selected?: boolean }) => (
  <div
    className={`flex h-[52px] items-center gap-1 overflow-hidden border pl-1 whitespace-nowrap ${
      selected ? "border-[#66a7e8] bg-[#d1e8ff]" : "border-transparent"
    }`}
  >
    {icon}
    {label}
  </div>
);

const MenuItem = ({ label, className = "border-transparent" }: { label: string; className?: string }) => (
  <button type="button" role="menuitem" className={`flex h-[22px] w-full items-center border pl-[31px] ${className}`}>
    {label}
  </button>
);

const ContextMenu = () => (
  <div role="menu" className="absolute top-4 left-[107px] w-[171px] border border-[#979797] bg-[#f0f0f0] p-[2px]">
    <div className="absolute top-[2px] bottom-[2px] left-[29px] w-px bg-[#d7d7d7]" />
    <div className="relative">
      <MenuItem label="Открыть" className="border-transparent font-bold" />
      <MenuItem label="Подключить..." className="border-[#78aee5] bg-[#d1e2f2]" />
      <div className="my-[3px] ml-7 h-px bg-[#d7d7d7]" />
      <MenuItem label="Создать ярлык" />
      <div className="my-[3px] ml-7 h-px bg-[#d7d7d7]" />
      <MenuItem label="Свойства" />
    </div>
  </div>
);

const StatusBar = () => (
  <footer className="flex h-[22px] items-center pt-px pr-2 pl-[14px] text-[11px] text-[#1e395b]">
    <span className="w-[82px] border-r border-[#eeeeee]">Элементов: 3</span>
    <span className="w-[123px] border-r border-[#eeeeee] pl-[11px]">Выбран 1 элемент</span>
    <div className="ml-auto flex items-center gap-[7px]">
      <button type="button" aria-label="Таблица">
        <svg className="h-[13px] w-4" viewBox="0 0 16 13">
          <path d="M0.500 0.500h4v3.500h-4zM0.500 4.500h4V8h-4zM0.500 8.500h4V12h-4z" fill="#fff" stroke="#8d9aa8" />
          <path d="M2 2.200h1M2 10.300h1" stroke="#2f7a6a" />
          <path d="M2 6.300h1" stroke="#d8232a" />
          <path d="M6 2.500h4M11 2.500h4M6 6.500h4M11 6.500h4M6 10.500h4M11 10.500h4" stroke="#4b5d78" />
        </svg>
      </button>
      <button type="button" aria-label="Крупные значки">
        <svg className="h-[13px] w-[14px]" viewBox="0 0 14 13">
          <path d="M0.500 0.500h13v12h-13z" fill="#fff" stroke="#8f9db0" />
          <path d="M2 2h10v8.500H2z" fill="#3f9bdc" />
          <path d="M2 5c3-2 6-2 10 2v1L2 7z" fill="#dff0fb" />
          <path d="M2 7c4-0.500 7 1 10 2v1.500H2z" fill="#1f6b50" />
        </svg>
      </button>
    </div>
  </footer>
);

const App = () => {
  return (
    <div className="flex min-h-screen flex-col border-r border-[#b9734f] bg-[#e99066] pr-[6px] pb-[6px] pl-[5px] font-['Open_Sans','Noto_Sans',sans-serif] text-xs">
      <Gradients />
      <TitleBar />
      <div className="flex flex-1 flex-col border border-[#c2764f] bg-white">
        <TabBar />
        <Ribbon />
        <AddressRow />
        <div className="flex flex-1">
          <NavPane />
          <main className="flex-1 pt-[7px] pl-[15px]">
            <div className="grid grid-cols-[250px_250px] gap-1 text-black">
              <Tile icon={<FolderShareLarge />} label="c hdd" />
              <div className="relative">
                <Tile icon={<PrinterLarge />} label="HP Deskjet" selected />
                <ContextMenu />
              </div>
              <Tile icon={<FolderShareLarge />} label="Users" />
            </div>
          </main>
        </div>
        <StatusBar />
      </div>
    </div>
  );
};

export default App;
